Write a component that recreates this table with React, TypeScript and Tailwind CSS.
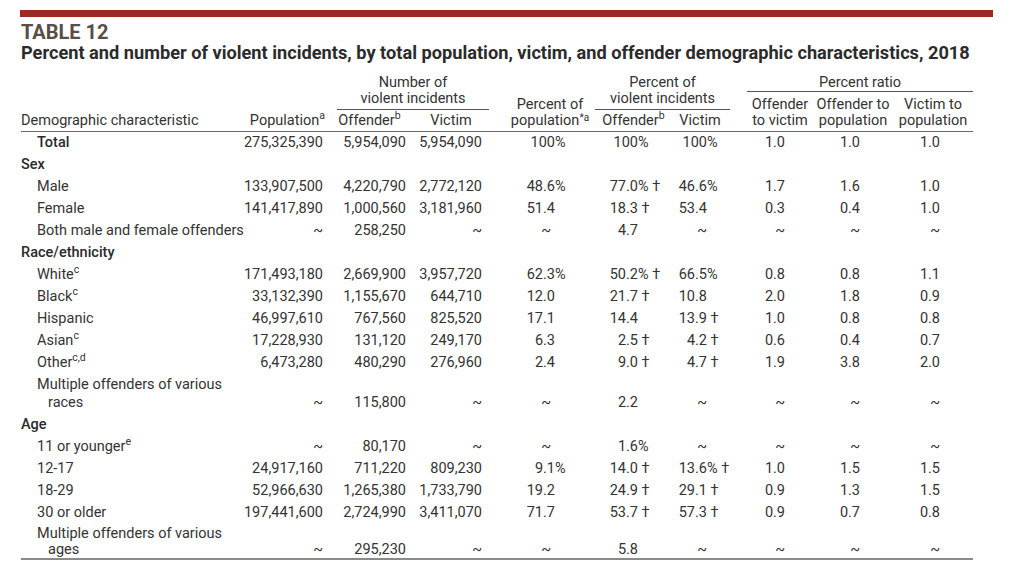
import type { ReactNode } from "react";

const GRID = "grid grid-cols-[220px_89px_83px_76px_106px_67px_85px_66px_80px_80px]";

// widths of the number box in each decimal-aligned column
const numW = ["w-[66px]", "w-[43px]", "w-[45px]", "w-[38px]", "w-[47px]", "w-[47px]"];

type Row =
  | { kind: "cat"; label: string }
  | { kind: "item" | "total"; label: string; sup?: string; vals: string[] }
  | { kind: "multi"; label: string; cont: string; vals: string[]; last?: boolean };

const rows: Row[] = [
  {
    kind: "total",
    label: "Total",
    vals: ["275,325,390", "5,954,090", "5,954,090", "100%", "100%", "100%", "1.0", "1.0", "1.0"],
  },
  { kind: "cat", label: "Sex" },
  {
    kind: "item",
    label: "Male",
    vals: ["133,907,500", "4,220,790", "2,772,120", "48.6%", "77.0% †", "46.6%", "1.7", "1.6", "1.0"],
  },
  {
    kind: "item",
    label: "Female",
    vals: ["141,417,890", "1,000,560", "3,181,960", "51.4", "18.3 †", "53.4", "0.3", "0.4", "1.0"],
  },
  {
    kind: "item",
    label: "Both male and female offenders",
    vals: ["~", "258,250", "~", "~", "4.7", "~", "~", "~", "~"],
  },
  { kind: "cat", label: "Race/ethnicity" },
  {
    kind: "item",
    label: "White",
    sup: "c",
    vals: ["171,493,180", "2,669,900", "3,957,720", "62.3%", "50.2% †", "66.5%", "0.8", "0.8", "1.1"],
  },
  {
    kind: "item",
    label: "Black",
    sup: "c",
    vals: ["33,132,390", "1,155,670", "644,710", "12.0", "21.7 †", "10.8", "2.0", "1.8", "0.9"],
  },
  {
    kind: "item",
    label: "Hispanic",
    vals: ["46,997,610", "767,560", "825,520", "17.1", "14.4", "13.9 †", "1.0", "0.8", "0.8"],
  },
  {
    kind: "item",
    label: "Asian",
    sup: "c",
    vals: ["17,228,930", "131,120", "249,170", "6.3", "2.5 †", "4.2 †", "0.6", "0.4", "0.7"],
  },
  {
    kind: "item",
    label: "Other",
    sup: "c,d",
    vals: ["6,473,280", "480,290", "276,960", "2.4", "9.0 †", "4.7 †", "1.9", "3.8", "2.0"],
  },
  {
    kind: "multi",
    label: "Multiple offenders of various",
    cont: "races",
    vals: ["~", "115,800", "~", "~", "2.2", "~", "~", "~", "~"],
  },
  { kind: "cat", label: "Age" },
  {
    kind: "item",
    label: "11 or younger",
    sup: "e",
    vals: ["~", "80,170", "~", "~", "1.6%", "~", "~", "~", "~"],
  },
  {
    kind: "item",
    label: "12-17",
    vals: ["24,917,160", "711,220", "809,230", "9.1%", "14.0 †", "13.6% †", "1.0", "1.5", "1.5"],
  },
  {
    kind: "item",
    label: "18-29",
    vals: ["52,966,630", "1,265,380", "1,733,790", "19.2", "24.9 †", "29.1 †", "0.9", "1.3", "1.5"],
  },
  {
    kind: "item",
    label: "30 or older",
    vals: ["197,441,600", "2,724,990", "3,411,070", "71.7", "53.7 †", "57.3 †", "0.9", "0.7", "0.8"],
  },
  {
    kind: "multi",
    label: "Multiple offenders of various",
    cont: "ages",
    vals: ["~", "295,230", "~", "~", "5.8", "~", "~", "~", "~"],
    last: true,
  },
];

function Dec({ v, i }: { v: string; i: number }) {
  const m = v.match(/^([\d.~]+)(.*)$/);
  const num = m ? m[1] : v;
  const rest = m ? m[2] : "";
  return (
    <div className="flex whitespace-pre">
      <span className={`${numW[i]} shrink-0 text-right ${num === "~" && i === 0 ? "pr-[4px]" : ""}`}>
        {num}
      </span>
      <span>{rest}</span>
    </div>
  );
}

function Values({ vals }: { vals: string[] }) {
  return (
    <>
      {vals.slice(0, 3).map((v, i) => (
        // biome-ignore lint/suspicious/noArrayIndexKey: fixed columns
        <div key={i} className="self-end text-right pr-[7px]">
          {v}
        </div>
      ))}
      {vals.slice(3).map((v, i) => (
        // biome-ignore lint/suspicious/noArrayIndexKey: fixed columns
        <div key={i + 3} className="self-end">
          <Dec v={v} i={i} />
        </div>
      ))}
    </>
  );
}

function Sup({ children }: { children: ReactNode }) {
  return <sup className="text-[10.5px] -top-[6px]">{children}</sup>;
}

function BodyRow({ row }: { row: Row }) {
  if (row.kind === "cat") {
    return (
      <div className={`${GRID} leading-[22px]`}>
        <div className="font-medium text-[#2a2a2a]">{row.label}</div>
      </div>
    );
  }
  if (row.kind === "multi") {
    return (
      <div className={`${GRID} ${row.last ? "leading-[16px] pt-[2px]" : "leading-[18px] py-[2px]"}`}>
        <div className="pl-[16px]">
          <div>{row.label}</div>
          <div className="pl-[11px]">{row.cont}</div>
        </div>
        <Values vals={row.vals} />
      </div>
    );
  }
  return (
    <div className={`${GRID} leading-[22px]`}>
      <div className={`pl-[16px] whitespace-nowrap ${row.kind === "total" ? "font-medium text-[#2a2a2a]" : ""}`}>
        {row.label}
        {row.sup && <Sup>{row.sup}</Sup>}
      </div>
      <Values vals={row.vals} />
    </div>
  );
}

function Header() {
  return (
    <div className={`${GRID} grid-rows-[18px_18px_21px] border-b border-[#6a6a6a] leading-4`}>
      <div className="col-start-1 row-start-3 self-end pb-[2px]">Demographic characteristic</div>
      <div className="col-start-2 row-start-3 self-end pb-[2px] text-right pr-[5px] whitespace-nowrap">
        Population<Sup>a</Sup>
      </div>
      <div className="col-start-3 col-span-2 row-start-1 row-span-2 ml-[7px] border-b border-[#555] pt-[1px] text-center">
        Number of
        <br />
        violent incidents
      </div>
      <div className="col-start-3 row-start-3 self-end pb-[2px] flex justify-center pr-[4px]">
        <span className="whitespace-nowrap">
          Offender<Sup>b</Sup>
        </span>
      </div>
      <div className="col-start-4 row-start-3 self-end pb-[2px] text-center">Victim</div>
      <div className="col-start-5 row-start-2 row-span-2 self-end pb-[2px] pl-[18px] pr-[2px] flex flex-col items-center">
        <span className="whitespace-nowrap">Percent of</span>
        <span className="whitespace-nowrap">
          population<sup className="text-[10px] -top-[4px]">*a</sup>
        </span>
      </div>
      <div className="col-start-6 col-span-2 row-start-1 row-span-2 mr-[17px] border-b border-[#555] pt-[1px] text-center">
        Percent of
        <br />
        violent incidents
      </div>
      <div className="col-start-6 row-start-3 self-end pb-[2px] pl-[10px] flex justify-center">
        <span className="whitespace-nowrap">
          Offender<Sup>b</Sup>
        </span>
      </div>
      <div className="col-start-7 row-start-3 self-end pb-[2px] pr-[9px] text-center">Victim</div>
      <div className="col-start-8 col-span-3 row-start-1 border-b border-[#555] pt-[1px] text-center">
        Percent ratio
      </div>
      <div className="col-start-8 row-start-2 row-span-2 self-end pb-[2px] flex flex-col items-center">
        <span className="whitespace-nowrap">Offender</span>
        <span className="whitespace-nowrap">to victim</span>
      </div>
      <div className="col-start-9 row-start-2 row-span-2 self-end pb-[2px] flex flex-col items-center">
        <span className="whitespace-nowrap">Offender to</span>
        <span className="whitespace-nowrap">population</span>
      </div>
      <div className="col-start-10 row-start-2 row-span-2 self-end pb-[2px] flex flex-col items-center">
        <span className="whitespace-nowrap">Victim to</span>
        <span className="whitespace-nowrap">population</span>
      </div>
    </div>
  );
}

export default function App() {
  return (
    <div className="w-[1024px] h-[561px] overflow-hidden bg-white pl-[20px] pt-[10px] font-['Roboto',sans-serif] text-[14.5px] text-[#333]">
      <div className="w-[973px] h-[7px] bg-[#9c2a21]" />
      <div className="ml-[1px] mt-[5px]">
        <div className="text-[20px] leading-[20px] font-bold text-[#5a4d47]">TABLE 12</div>
        <div className="text-[18.2px] leading-[21px] font-bold text-[#2b2b2b] whitespace-nowrap">
          Percent and number of violent incidents, by total population, victim, and offender demographic characteristics, 2018
        </div>
        <div className="mt-[11px] w-[952px]">
          <Header />
          <div className="border-b-2 border-[#8a8a8a]">
            {rows.map((r, i) => (
              // biome-ignore lint/suspicious/noArrayIndexKey: static rows
              <BodyRow key={i} row={r} />
            ))}
          </div>
        </div>
      </div>
    </div>
  );
}
